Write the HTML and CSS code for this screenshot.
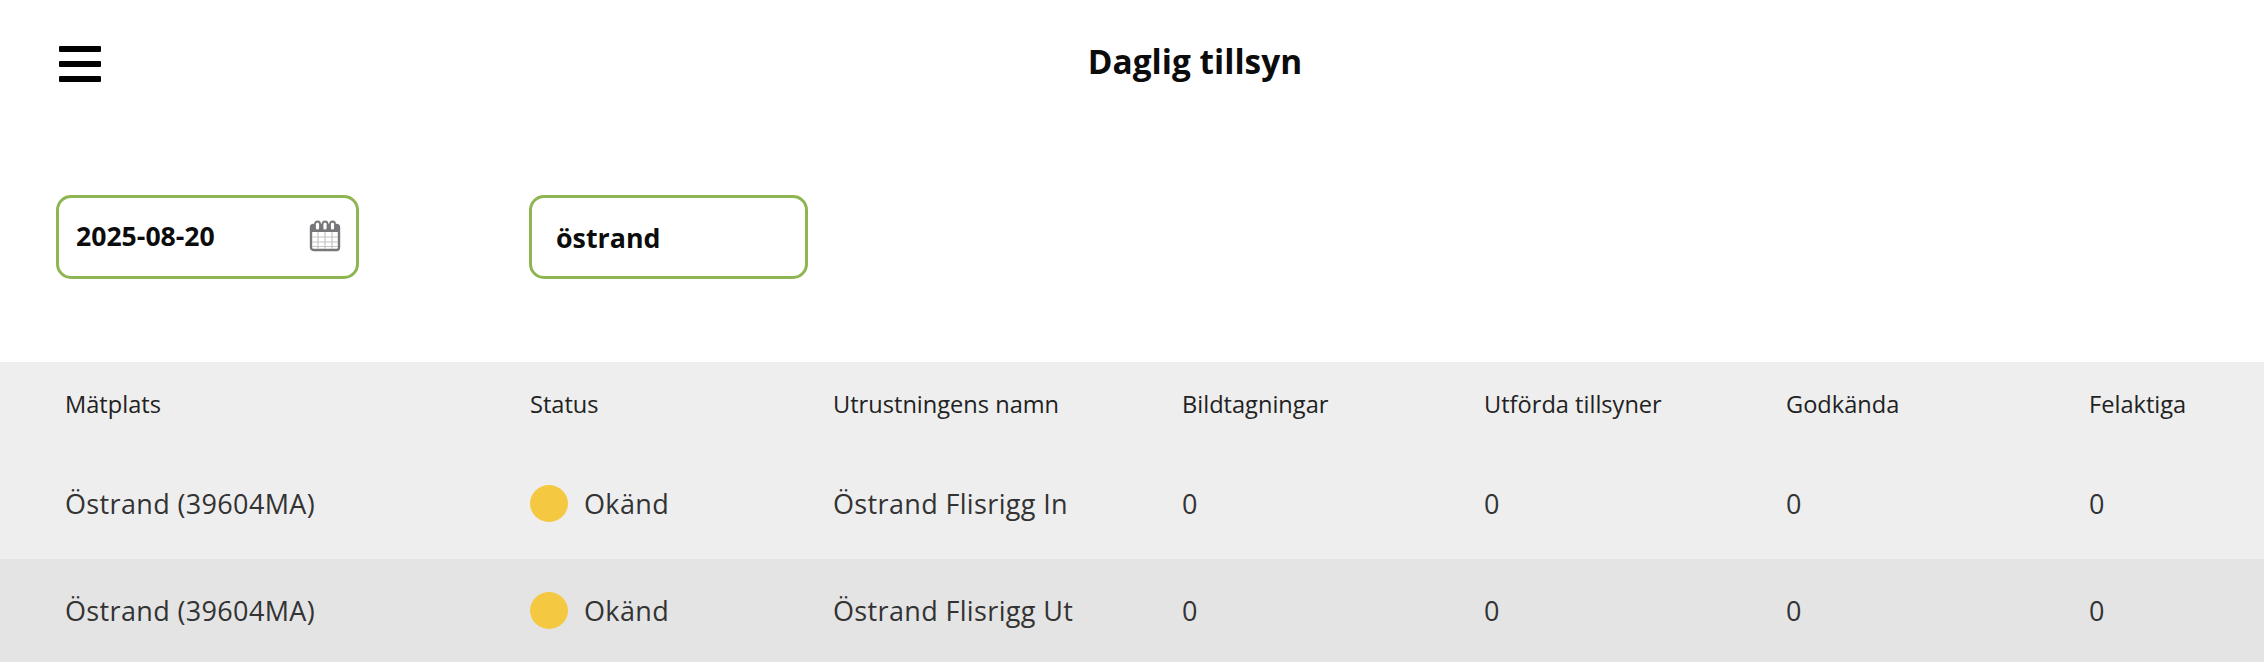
FILE: index.html
```html
<!DOCTYPE html>
<html lang="sv">
<head>
<meta charset="utf-8">
<title>Daglig tillsyn</title>
<link rel="stylesheet" href="styles.css">
</head>
<body>
<header class="topbar">
  <button class="menu" aria-label="Meny"><span></span><span></span><span></span></button>
  <h1 class="title">Daglig tillsyn</h1>
</header>
<section class="filters">
  <div class="field field-date">
    <span class="value">2025-08-20</span>
    <svg class="cal" viewBox="0 0 32 32" width="32" height="32" aria-hidden="true">
      <rect x="2" y="5" width="28" height="25" rx="2.5" fill="#fff" stroke="#77777b" stroke-width="2.4"/>
      <path d="M2 5h28v7H2z" fill="#77777b"/>
      <path d="M3 17h26M3 22h26M3 26.5h26M9 12v17M16 12v17M23 12v17" stroke="#c4c4c6" stroke-width="1.2" fill="none"/>
      <g fill="#fff" stroke="#77777b" stroke-width="1.8">
        <rect x="6" y="1.5" width="5" height="9" rx="2.5"/>
        <rect x="13.5" y="1.5" width="5" height="9" rx="2.5"/>
        <rect x="21" y="1.5" width="5" height="9" rx="2.5"/>
      </g>
    </svg>
  </div>
  <div class="field field-search"><span class="value">östrand</span></div>
</section>
<section class="table">
  <div class="row head">
    <div>Mätplats</div><div>Status</div><div>Utrustningens namn</div><div>Bildtagningar</div><div>Utförda tillsyner</div><div>Godkända</div><div>Felaktiga</div>
  </div>
  <div class="row first">
    <div>Östrand (39604MA)</div><div class="status"><i class="dot"></i>Okänd</div><div>Östrand Flisrigg In</div><div>0</div><div>0</div><div>0</div><div>0</div>
  </div>
  <div class="row second">
    <div>Östrand (39604MA)</div><div class="status"><i class="dot"></i>Okänd</div><div>Östrand Flisrigg Ut</div><div>0</div><div>0</div><div>0</div><div>0</div>
  </div>
</section>
</body>
</html>
```
FILE: styles.css
```css
* { box-sizing: border-box; }
html, body { margin: 0; height: 662px; overflow: hidden; }
body { background: #fff; font-family: "Open Sans", "Liberation Sans", sans-serif; color: #333; }

.topbar { height: 125px; position: relative; display: flex; justify-content: center; padding: 38px 0 0 126px; }
.title { margin: 0; font-size: 33.4px; line-height: 46px; font-weight: 700; color: #0c0c0c; }
.menu { position: absolute; left: 59px; top: 46px; width: 42px; height: 36px; padding: 0; border: 0; background: none; display: flex; flex-direction: column; justify-content: space-between; }
.menu span { display: block; height: 6px; background: #000; border-radius: 1px; }

.filters { height: 237px; padding: 70px 0 0 56px; display: flex; gap: 170px; align-items: flex-start; }
.field { height: 84px; border: 3px solid #8fb552; border-radius: 15px; display: flex; align-items: center; justify-content: space-between; font-size: 26.8px; font-weight: 700; color: #0c0c0c; }
.field-date { width: 303px; padding: 0 15px 2px 17px; font-size: 26.6px; }
.field-search { width: 279px; padding: 0 24px; }
.cal { display: block; }

.table { background: #eee; }
.row { display: grid; grid-template-columns: 465px 303px 349px 302px 302px 303px 174px; padding-left: 65px; align-items: center; }
.head { height: 85px; padding-bottom: 2px; font-size: 23.6px; color: #222; }
.first { height: 112px; font-size: 27px; letter-spacing: .35px; }
.second { height: 103px; font-size: 27px; letter-spacing: .35px; background: #e4e4e4; }
.status { display: flex; align-items: center; gap: 16px; }
.dot { width: 38px; height: 37px; border-radius: 50%; background: #f5c842; display: block; }
```
